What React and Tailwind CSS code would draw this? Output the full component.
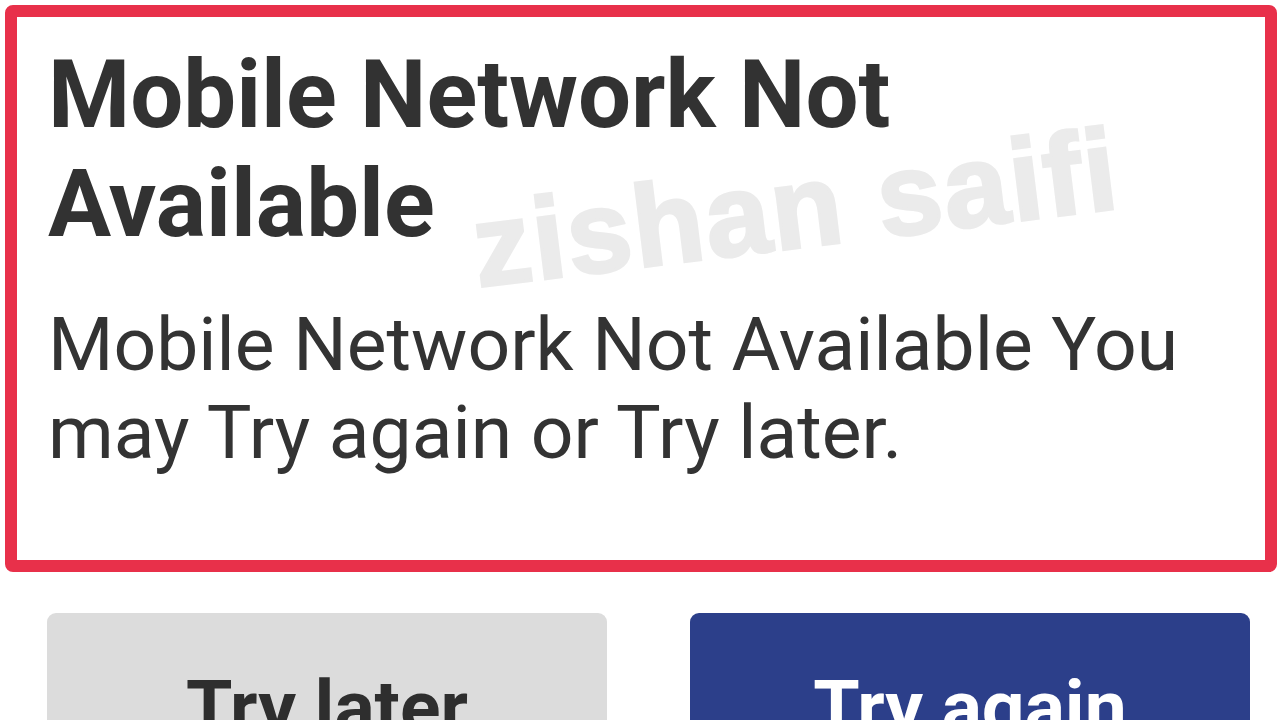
const roboto = { fontFamily: 'Roboto, "Noto Sans", sans-serif' };

// faint diagonal signature laid across the dialog
function Watermark() {
  return (
    <div
      className="pointer-events-none absolute left-[478px] top-[189px] origin-[0%_85%] -rotate-[7deg] whitespace-nowrap text-[116px] font-bold leading-none tracking-[2px] text-[#ebebeb] [-webkit-text-stroke:3px_#ebebeb]"
      style={{ fontFamily: '"Liberation Sans", Arial, sans-serif' }}
    >
      zishan saifi
    </div>
  );
}

export default function App() {
  return (
    <div className="relative h-[720px] w-[1280px] overflow-hidden bg-white" style={roboto}>
      <div className="ml-[5px] mt-[5px] h-[567px] w-[1272px] rounded-[8px] border-[12px] border-[#e8304a] pl-[31px] pt-[24px]">
        <h1 className="text-[94px] font-bold leading-[109px] text-[#323232]">
          Mobile Network Not
          <br />
          Available
        </h1>
        <p className="mt-[41px] text-[75px] leading-[88px] text-[#333333]">
          Mobile Network Not Available You
          <br />
          may Try again or Try later.
        </p>
      </div>
      <Watermark />
      <div className="mt-[41px] flex gap-[83px] pl-[47px]">
        <button className="flex h-[160px] w-[560px] shrink-0 items-start justify-center rounded-[9px] bg-[#dcdcdc] pt-[57px] text-[75px] font-bold leading-none text-[#2e2e2e]">
          Try later
        </button>
        <button className="flex h-[160px] w-[560px] shrink-0 items-start justify-center rounded-[9px] bg-[#2c3f8a] pt-[57px] text-[75px] font-bold leading-none text-white">
          Try again
        </button>
      </div>
    </div>
  );
}
